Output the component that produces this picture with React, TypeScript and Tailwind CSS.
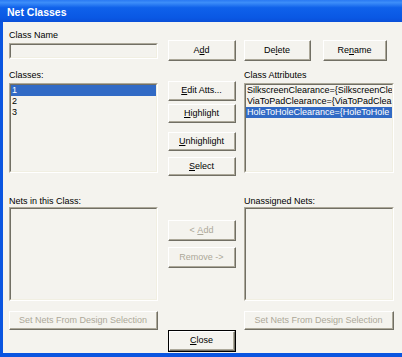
import React from "react";

const font = { fontFamily: '"Liberation Sans", Arial, sans-serif' };

function Btn({
  children,
  w,
  h,
  mt,
  disabled,
  def,
  className = "",
}: {
  children: React.ReactNode;
  w: string;
  h: string;
  mt?: string;
  disabled?: boolean;
  def?: boolean;
  className?: string;
}) {
  const inner = (
    <div className="flex-1 flex border-t border-l border-t-white border-l-white border-r border-b border-r-[#716F64] border-b-[#716F64]">
      <div
        className={`flex-1 flex items-center justify-center border-r border-b border-r-[#ACA899] border-b-[#ACA899] text-[9px] leading-[11px] whitespace-pre ${
          disabled ? "text-[#ACA899]" : "text-black"
        }`}
      >
        {children}
      </div>
    </div>
  );
  return (
    <div
      className={`${w} ${h} ${mt ?? ""} flex shrink-0 ${def ? "border border-black" : ""} ${className}`}
    >
      {inner}
    </div>
  );
}

function Sunken({ w, h, mt, children }: { w: string; h: string; mt?: string; children?: React.ReactNode }) {
  return (
    <div
      className={`${w} ${h} ${mt ?? ""} flex border-t border-l border-t-[#ACA899] border-l-[#ACA899] border-r border-b border-r-white border-b-white`}
    >
      <div className="flex-1 flex flex-col border-t border-l border-t-[#716F64] border-l-[#716F64] border-r border-b border-r-[#F1EFE2] border-b-[#F1EFE2] bg-[#F4F3EE] overflow-hidden">
        {children}
      </div>
    </div>
  );
}

function Item({ children, sel }: { children: React.ReactNode; sel?: boolean }) {
  return (
    <div
      className={`h-[11px] leading-[11px] text-[9px] pl-[1px] whitespace-nowrap overflow-hidden ${
        sel ? "bg-[#316AC5] text-white" : "text-black"
      }`}
    >
      {children}
    </div>
  );
}

function Label({ children }: { children: React.ReactNode }) {
  return <div className="h-[11px] leading-[11px] text-[9px] text-black whitespace-nowrap">{children}</div>;
}

export default function App() {
  return (
    <div style={font} className="w-[402px] h-[357px] flex flex-col bg-[#0A55E0] overflow-hidden">
      <div className="h-[22px] shrink-0 flex items-center pl-[7px] bg-[linear-gradient(to_bottom,#2a7af3_0%,#3d8ef9_12%,#0f61ea_35%,#0a58e4_80%,#0a4fd8_100%)]">
        <span className="text-white font-bold text-[10.5px] leading-[12px] mt-[1px]">Net Classes</span>
      </div>
      <div className="flex-1 ml-[3px] mb-[4px] bg-[#F4F3EE] pl-[6px] pt-[8px] flex flex-col">
        {/* Row 1 */}
        <div className="flex items-start">
          <div className="w-[149px] flex flex-col">
            <Label>Class Name</Label>
            <Sunken w="w-[149px]" h="h-[16px]" mt="mt-[2px]" />
          </div>
          <Btn w="w-[68px]" h="h-[21px]" mt="mt-[10px]" className="ml-[10px]">
            A<u>d</u>d
          </Btn>
          <Btn w="w-[67px]" h="h-[21px]" mt="mt-[10px]" className="ml-[8px]">
            De<u>l</u>ete
          </Btn>
          <Btn w="w-[64px]" h="h-[21px]" mt="mt-[10px]" className="ml-[12px]">
            Re<u>n</u>ame
          </Btn>
        </div>
        {/* Row 2 */}
        <div className="flex items-start mt-[9px]">
          <div className="w-[149px] flex flex-col">
            <Label>Classes:</Label>
            <Sunken w="w-[149px]" h="h-[90px]" mt="mt-[2px]">
              <Item sel>1</Item>
              <Item>2</Item>
              <Item>3</Item>
            </Sunken>
          </div>
          <div className="ml-[10px] w-[68px] flex flex-col">
            <Btn w="w-[68px]" h="h-[20px]" mt="mt-[11px]">
              <u>E</u>dit Atts...
            </Btn>
            <Btn w="w-[68px]" h="h-[19px]" mt="mt-[3px]">
              <u>H</u>ighlight
            </Btn>
            <Btn w="w-[68px]" h="h-[19px]" mt="mt-[9px]">
              <u>U</u>nhighlight
            </Btn>
            <Btn w="w-[68px]" h="h-[19px]" mt="mt-[6px]">
              <u>S</u>elect
            </Btn>
          </div>
          <div className="ml-[8px] w-[150px] flex flex-col">
            <Label>Class Attributes</Label>
            <Sunken w="w-[150px]" h="h-[90px]" mt="mt-[2px]">
              <Item>SilkscreenClearance={"{"}SilkscreenCle</Item>
              <Item>ViaToPadClearance={"{"}ViaToPadClea</Item>
              <Item sel>HoleToHoleClearance={"{"}HoleToHole</Item>
            </Sunken>
          </div>
        </div>
        {/* Row 3 */}
        <div className="flex items-start mt-[20px]">
          <div className="w-[149px] flex flex-col">
            <Label>Nets in this Class:</Label>
            <Sunken w="w-[149px]" h="h-[94px]" />
          </div>
          <div className="ml-[10px] w-[68px] flex flex-col">
            <Btn w="w-[68px]" h="h-[21px]" mt="mt-[24px]" disabled>
              {"< "}
              <u>A</u>dd
            </Btn>
            <Btn w="w-[68px]" h="h-[21px]" mt="mt-[6px]" disabled>
              {"Remove ->"}
            </Btn>
          </div>
          <div className="ml-[8px] w-[150px] flex flex-col">
            <Label>Unassigned Nets:</Label>
            <Sunken w="w-[150px]" h="h-[94px]" />
          </div>
        </div>
        {/* Row 4 */}
        <div className="flex items-start mt-[10px]">
          <Btn w="w-[149px]" h="h-[19px]" disabled>
            Set Nets From Design Selection
          </Btn>
          <Btn w="w-[68px]" h="h-[22px]" mt="mt-[19px]" def className="ml-[10px]">
            <u>C</u>lose
          </Btn>
          <Btn w="w-[150px]" h="h-[19px]" disabled className="ml-[8px]">
            Set Nets From Design Selection
          </Btn>
        </div>
      </div>
    </div>
  );
}
